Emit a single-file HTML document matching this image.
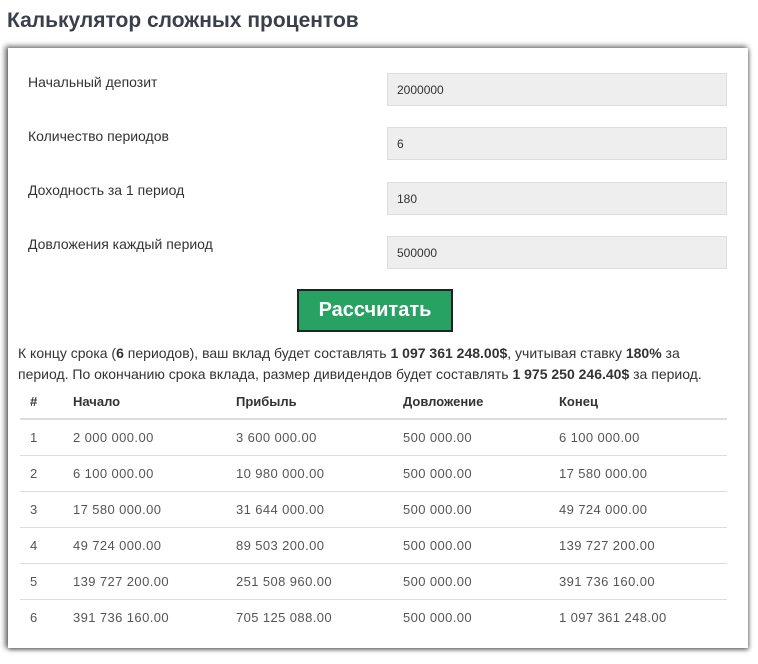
<!DOCTYPE html>
<html><head><meta charset="utf-8"><style>
body{margin:0;background:#fff;font-family:"Liberation Sans",sans-serif;width:758px;height:664px;overflow:hidden;position:relative}
h1{position:absolute;left:7px;top:9px;margin:0;font-size:21px;font-weight:bold;color:#3a3f4a}
.box{position:absolute;left:8px;top:48px;width:740px;height:600px;background:#fff;box-shadow:-2px -1px 5px 1px rgba(0,0,0,.55),1px 2px 4px rgba(0,0,0,.4)}
.lbl{position:absolute;left:28px;font-size:14px;color:#333}
.inp{position:absolute;left:387px;width:340px;height:33px;background:#eee;border:1px solid #ddd;font-size:12px;color:#333;line-height:32px;text-indent:9px;box-sizing:border-box}
.btn{position:absolute;left:297px;top:289px;width:156px;height:43px;background:#27a262;border:2px solid #222;box-sizing:border-box;color:#fff;font-weight:bold;font-size:20px;text-align:center;line-height:38px}
.txt{position:absolute;left:18px;top:343px;width:730px;font-size:14px;line-height:21px;color:#333;white-space:nowrap}
table{position:absolute;left:20px;top:384px;width:707px;border-collapse:collapse;font-size:13px;color:#555}
th{text-align:left;font-weight:bold;height:34px;border-bottom:2px solid #ddd;color:#333;padding:0}
td{height:35px;border-bottom:1px solid #ddd;padding:0;letter-spacing:0.4px}
tr:last-child td{border-bottom:none}
.c0{width:13px;padding-left:10px}
</style></head><body>
<h1>Калькулятор сложных процентов</h1>
<div class="box"></div>
<div class="lbl" style="top:74px">Начальный депозит</div>
<div class="lbl" style="top:128px">Количество периодов</div>
<div class="lbl" style="top:182px">Доходность за 1 период</div>
<div class="lbl" style="top:236px">Довложения каждый период</div>
<div class="inp" style="top:73px">2000000</div>
<div class="inp" style="top:127px">6</div>
<div class="inp" style="top:182px">180</div>
<div class="inp" style="top:236px">500000</div>
<div class="btn">Рассчитать</div>
<div class="txt">К концу срока (<b>6</b> периодов), ваш вклад будет составлять <b>1 097 361 248.00$</b>, учитывая ставку <b>180%</b> за<br>период. По окончанию срока вклада, размер дивидендов будет составлять <b>1 975 250 246.40$</b> за период.</div>
<table>
<tr><th class="c0" style="width:43px">#</th><th style="width:163px">Начало</th><th style="width:167px">Прибыль</th><th style="width:156px">Довложение</th><th>Конец</th></tr>
<tr><td class="c0">1</td><td>2 000 000.00</td><td>3 600 000.00</td><td>500 000.00</td><td>6 100 000.00</td></tr>
<tr><td class="c0">2</td><td>6 100 000.00</td><td>10 980 000.00</td><td>500 000.00</td><td>17 580 000.00</td></tr>
<tr><td class="c0">3</td><td>17 580 000.00</td><td>31 644 000.00</td><td>500 000.00</td><td>49 724 000.00</td></tr>
<tr><td class="c0">4</td><td>49 724 000.00</td><td>89 503 200.00</td><td>500 000.00</td><td>139 727 200.00</td></tr>
<tr><td class="c0">5</td><td>139 727 200.00</td><td>251 508 960.00</td><td>500 000.00</td><td>391 736 160.00</td></tr>
<tr><td class="c0">6</td><td>391 736 160.00</td><td>705 125 088.00</td><td>500 000.00</td><td>1 097 361 248.00</td></tr>
</table>
</body></html>
